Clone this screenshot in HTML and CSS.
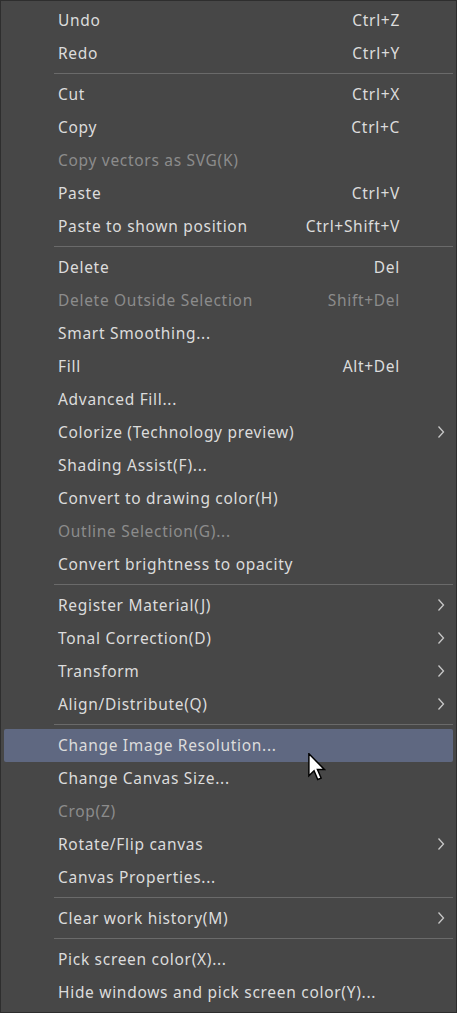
FILE: index.html
```html
<!DOCTYPE html>
<html lang="en">
<head>
    <meta charset="UTF-8">
    <meta name="viewport" content="width=device-width, initial-scale=1.0">
    <title>Edit menu</title>
    <link rel="stylesheet" href="styles.css">
</head>
<body>
    <div class="menu">
        <div class="item"><span class="label">Undo</span><span class="key">Ctrl+Z</span><span class="sub"></span></div>
        <div class="item"><span class="label">Redo</span><span class="key">Ctrl+Y</span><span class="sub"></span></div>
        <div class="sep"></div>
        <div class="item"><span class="label">Cut</span><span class="key">Ctrl+X</span><span class="sub"></span></div>
        <div class="item"><span class="label">Copy</span><span class="key">Ctrl+C</span><span class="sub"></span></div>
        <div class="item disabled"><span class="label">Copy vectors as SVG(K)</span><span class="key"></span><span class="sub"></span></div>
        <div class="item"><span class="label">Paste</span><span class="key">Ctrl+V</span><span class="sub"></span></div>
        <div class="item"><span class="label">Paste to shown position</span><span class="key">Ctrl+Shift+V</span><span class="sub"></span></div>
        <div class="sep"></div>
        <div class="item"><span class="label">Delete</span><span class="key">Del</span><span class="sub"></span></div>
        <div class="item disabled"><span class="label">Delete Outside Selection</span><span class="key">Shift+Del</span><span class="sub"></span></div>
        <div class="item"><span class="label">Smart Smoothing...</span><span class="key"></span><span class="sub"></span></div>
        <div class="item"><span class="label">Fill</span><span class="key">Alt+Del</span><span class="sub"></span></div>
        <div class="item"><span class="label">Advanced Fill...</span><span class="key"></span><span class="sub"></span></div>
        <div class="item"><span class="label">Colorize (Technology preview)</span><span class="key"></span><span class="sub"><svg viewBox="0 0 8 14"><path d="M1.5 1.5 L6.5 7 L1.5 12.5"/></svg></span></div>
        <div class="item"><span class="label">Shading Assist(F)...</span><span class="key"></span><span class="sub"></span></div>
        <div class="item"><span class="label">Convert to drawing color(H)</span><span class="key"></span><span class="sub"></span></div>
        <div class="item disabled"><span class="label">Outline Selection(G)...</span><span class="key"></span><span class="sub"></span></div>
        <div class="item"><span class="label">Convert brightness to opacity</span><span class="key"></span><span class="sub"></span></div>
        <div class="sep"></div>
        <div class="item"><span class="label">Register Material(J)</span><span class="key"></span><span class="sub"><svg viewBox="0 0 8 14"><path d="M1.5 1.5 L6.5 7 L1.5 12.5"/></svg></span></div>
        <div class="item"><span class="label">Tonal Correction(D)</span><span class="key"></span><span class="sub"><svg viewBox="0 0 8 14"><path d="M1.5 1.5 L6.5 7 L1.5 12.5"/></svg></span></div>
        <div class="item"><span class="label">Transform</span><span class="key"></span><span class="sub"><svg viewBox="0 0 8 14"><path d="M1.5 1.5 L6.5 7 L1.5 12.5"/></svg></span></div>
        <div class="item"><span class="label">Align/Distribute(Q)</span><span class="key"></span><span class="sub"><svg viewBox="0 0 8 14"><path d="M1.5 1.5 L6.5 7 L1.5 12.5"/></svg></span></div>
        <div class="sep"></div>
        <div class="item active"><span class="label">Change Image Resolution...</span><span class="key"></span><span class="sub"></span>
            <!-- mouse pointer hovering the item -->
            <svg class="pointer" viewBox="0 0 12 19" width="18" height="28">
                <path d="M0.5 0.5 V15.5 L4 12 L6.5 18 L8.8 17 L6.3 11.2 H11 Z" fill="#fff" stroke="#000" stroke-width="1"/>
            </svg>
        </div>
        <div class="item"><span class="label">Change Canvas Size...</span><span class="key"></span><span class="sub"></span></div>
        <div class="item disabled"><span class="label">Crop(Z)</span><span class="key"></span><span class="sub"></span></div>
        <div class="item"><span class="label">Rotate/Flip canvas</span><span class="key"></span><span class="sub"><svg viewBox="0 0 8 14"><path d="M1.5 1.5 L6.5 7 L1.5 12.5"/></svg></span></div>
        <div class="item"><span class="label">Canvas Properties...</span><span class="key"></span><span class="sub"></span></div>
        <div class="sep"></div>
        <div class="item"><span class="label">Clear work history(M)</span><span class="key"></span><span class="sub"><svg viewBox="0 0 8 14"><path d="M1.5 1.5 L6.5 7 L1.5 12.5"/></svg></span></div>
        <div class="sep"></div>
        <div class="item"><span class="label">Pick screen color(X)...</span><span class="key"></span><span class="sub"></span></div>
        <div class="item"><span class="label">Hide windows and pick screen color(Y)...</span><span class="key"></span><span class="sub"></span></div>
    </div>
</body>
</html>
```

FILE: styles.css
```css
body {
    margin: 0;
    background: #474747;
}
.menu {
    box-sizing: border-box;
    width: 457px;
    height: 1013px;
    padding: 3px 3px 0 3px;
    background: #474747;
    border: 1px solid #2e2e2e;
    font-family: "Noto Sans", "Open Sans", sans-serif;
    font-size: 15.5px;
    letter-spacing: 0.7px;
    color: #dcdcdc;
}
.item {
    position: relative;
    display: flex;
    align-items: center;
    height: 33px;
    padding-left: 54px;
    padding-bottom: 2px;
    box-sizing: border-box;
    border-radius: 2px;
}
.item .label {
    flex: 1;
    white-space: nowrap;
}
.item .key {
    white-space: nowrap;
    margin-right: -1px;
}
.item .sub {
    width: 54px;
    display: flex;
    justify-content: flex-end;
    padding-right: 8px;
    box-sizing: border-box;
}
.item .sub svg {
    width: 8px;
    height: 14px;
    fill: none;
    stroke: #c8c8c8;
    stroke-width: 1.3;
}
.disabled {
    color: #8c8c8c;
}
.active {
    background: #5f6881;
}
.pointer {
    position: absolute;
    left: 304px;
    top: 24px;
}
.sep {
    height: 1px;
    margin: 3px 0 4px 50px;
    background: #6a6a6a;
}
```
